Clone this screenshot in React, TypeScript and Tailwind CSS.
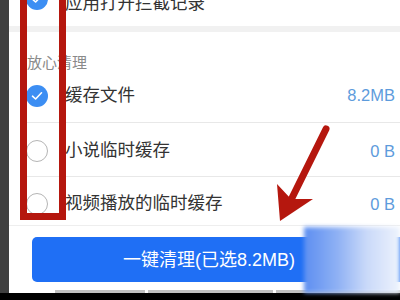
import React from "react";

const font = { fontFamily: '"Liberation Sans", "Noto Sans CJK SC", sans-serif' };

function Checked() {
  return (
    <div className="w-[22px] h-[22px] rounded-full bg-[#3c8ef3] flex items-center justify-center shrink-0">
      <svg width="12" height="10" viewBox="0 0 12 10" fill="none">
        <path d="M1.5 5.2 L4.6 8 L10.5 1.8" stroke="white" strokeWidth="1.6" strokeLinecap="round" strokeLinejoin="round" />
      </svg>
    </div>
  );
}

function Unchecked() {
  return <div className="w-[22px] h-[22px] rounded-full border border-[#b5b5b5] bg-white shrink-0" />;
}

function Row({ checked, label, value, cls }: { checked: boolean; label: string; value: string; cls: string }) {
  return (
    <div className={"flex items-center pl-[17px] pr-[5px] " + cls}>
      {checked ? <Checked /> : <Unchecked />}
      <span className="ml-[17px] text-[17.5px] text-[#333333] leading-none flex-1">{label}</span>
      <span className="text-[16.5px] text-[#5d9bdc] leading-none">{value}</span>
    </div>
  );
}

export default function App() {
  return (
    <div className="w-[400px] h-[300px] bg-black relative overflow-hidden flex flex-col" style={font}>
      <div className="h-[293px] flex">
        <div className="w-[9px] bg-[#404040]" />
        <div className="flex-1 bg-white flex flex-col overflow-hidden">
          <div className="h-[26px] flex items-start pl-[17px]">
            <div className="mt-[-12px]">
              <Checked />
            </div>
            <span className="ml-[17px] mt-[-5px] text-[17.5px] text-[#333333] leading-none">应用打开拦截记录</span>
          </div>
          <div className="h-[6px] bg-[#f1f1f1]" />
          <div className="h-[37px] pl-[18px] pt-[19px]">
            <span className="text-[15px] text-[#8a8a8a] leading-none">放心清理</span>
          </div>
          <div className="ml-[18px] border-b border-[#e8e8e8]">
            <Row checked label="缓存文件" value="8.2MB" cls="h-[53px] ml-[-18px]" />
          </div>
          <div className="ml-[18px] border-b border-[#e8e8e8]">
            <Row checked={false} label="小说临时缓存" value="0 B" cls="h-[53px] ml-[-18px] pt-[3px]" />
          </div>
          <div className="border-b border-[#eeeeee]">
            <Row checked={false} label="视频播放的临时缓存" value="0 B" cls="h-[48px] pt-[6px]" />
          </div>
          <div className="h-[11px]" />
          <div className="h-[45px] ml-[23px] mr-[-10px] rounded-[5px] bg-[#1f6ff5] flex items-center">
            <span className="ml-[91px] text-[18px] text-white leading-none">一键清理(已选8.2MB)</span>
          </div>
          <div className="flex-1 flex items-end">
            <div className="h-[3px] w-full flex gap-[3px] pl-[46px]">
              <div className="w-[90px] bg-[#c2c2c2]" />
              <div className="w-[125px] bg-[#c2c2c2]" />
              <div className="flex-1 bg-[#c2c2c2]" />
            </div>
          </div>
        </div>
      </div>
      <div
        className="absolute left-[304px] top-[227px] right-0 h-[66px] blur-[2px]"
        style={{ background: "linear-gradient(90deg, #5d8ff1 0%, #8fb1f4 35%, #c9d9f9 65%, #eef3fd 100%)" }}
      />
      <svg className="absolute left-0 top-0" width="400" height="300" viewBox="0 0 400 300">
        <rect x="23.5" y="-10" width="39" height="226.5" fill="none" stroke="#b5170e" strokeWidth="7" />
        <line x1="326" y1="129" x2="289" y2="204" stroke="#b5170e" strokeWidth="7" strokeLinecap="round" />
        <polygon points="280,221 277,184 291,199 313,199" fill="#b5170e" />
      </svg>
    </div>
  );
}
